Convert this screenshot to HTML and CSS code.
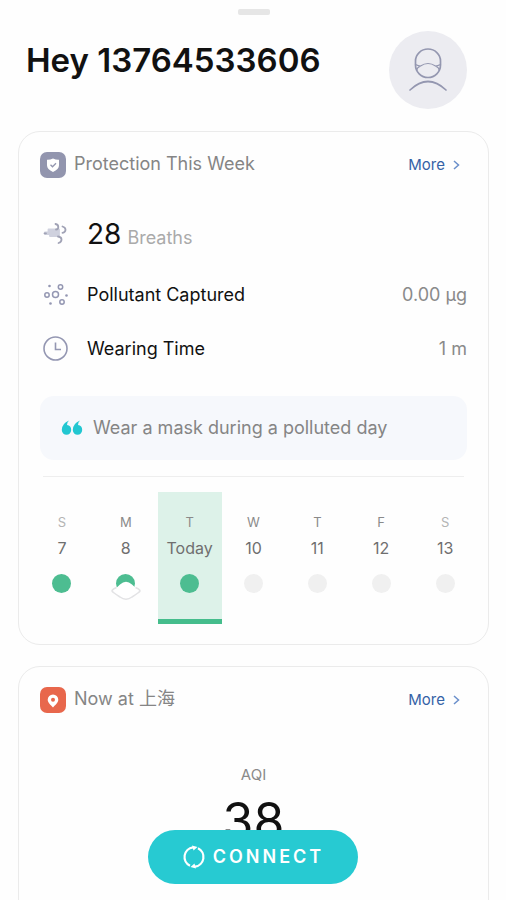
FILE: index.html
```html
<!DOCTYPE html>
<html lang="en">
<head>
<meta charset="utf-8">
<meta name="viewport" content="width=device-width, initial-scale=1">
<title>Protection</title>
<link rel="stylesheet" href="styles.css">
</head>
<body>
<div class="grabber"></div>
<header class="greeting">
  <h1>Hey 13764533606</h1>
  <button class="avatar" type="button" aria-label="Profile">
    <svg width="78" height="78" viewBox="0 0 78 78" fill="none" stroke="#9497b0" stroke-width="1.7" stroke-linecap="round">
      <path d="M26.500 30a12.500 12 0 0 1 25 0v4a12.500 12.500 0 0 1-25 0z"/>
      <path stroke-width="1.200" d="M26.500 33.500q3 1.500 5 1.500q7.500-5 15 0q2 0 5-1.500M31.500 35q-3.500 1.500-4 4.500M46.500 35q3.500 1.500 4 4.500"/>
      <path d="M21 59q18-17 36 0"/>
    </svg>
  </button>
</header>
<main>
  <section class="card">
    <div class="card-head">
      <svg class="badge" width="26" height="26" viewBox="0 0 26 26">
        <rect width="26" height="26" rx="7" fill="#9295ae"/>
        <path d="M13 6.500q3 1.500 6 1.300v5.500q0 4-6 6.700q-6-2.700-6-6.700v-5.500q3 .2 6-1.300z" fill="#fff"/>
        <path d="M10.500 12.800l2 2l3.500-3.500" fill="none" stroke="#9295ae" stroke-width="1.300"/>
      </svg>
      <h2>Protection This Week</h2>
      <a class="more" href="#week">More
        <svg width="7" height="10" viewBox="0 0 7 10" fill="none" stroke="#6a8fcb" stroke-width="1.500"><path d="M1 1l4.500 4L1 9"/></svg>
      </a>
    </div>
    <ul class="stats">
      <li class="breaths">
        <svg width="30" height="30" viewBox="0 0 30 30" fill="none" stroke="#a0a2b5" stroke-width="1.800" stroke-linecap="round">
          <path d="M8.500 10.500H19V17H10V15H5V13.500H8.500z" fill="#cfd1de" stroke="#cfd1de" stroke-linejoin="round"/>
          <path d="M15.500 5q2.800 .5 2.800 3t-2.300 2.500M22.500 7.500q3 .8 3 3.300t-3 3M4.500 14.300h1.500M18 17.500q3.500 .3 3.500 3t-3 3.500"/>
        </svg>
        <p><span class="count">28</span><span class="unit">Breaths</span></p>
      </li>
      <li>
        <svg width="30" height="30" viewBox="0 0 30 30" fill="none" stroke="#9497b2" stroke-width="1.500">
          <circle cx="15.500" cy="14.500" r="3"/><circle cx="7" cy="15" r="2.200"/><circle cx="20.500" cy="7" r="2.200"/><circle cx="22" cy="22" r="2.200"/>
          <g fill="#9497b2" stroke="none"><circle cx="9.500" cy="6" r="1.300"/><circle cx="26.500" cy="15.500" r="1.300"/><circle cx="10.500" cy="23.500" r="1.300"/></g>
        </svg>
        <span class="name">Pollutant Captured</span><span class="value">0.00 µg</span>
      </li>
      <li>
        <svg width="30" height="30" viewBox="0 0 30 30" fill="none" stroke="#9497b2" stroke-width="1.600">
          <circle cx="15.500" cy="14.500" r="11.500"/><path d="M15.500 8.500v7H21"/>
        </svg>
        <span class="name">Wearing Time</span><span class="value">1 m</span>
      </li>
    </ul>
    <p class="tip">
      <svg width="22" height="16" viewBox="0 0 22 16" fill="#22c7d1">
        <path id="q" d="M8 .5Q6 2.200 6 5Q10.200 5.600 10.200 10A4.700 4.800 0 0 1 .8 10Q.8 3.500 8 .5z"/>
        <use href="#q" x="11"/>
      </svg>
      Wear a mask during a polluted day
    </p>
    <ol class="week" id="week">
      <li class="weekend"><span class="day">S</span><span class="date">7</span><i class="dot done"></i></li>
      <li><span class="day">M</span><span class="date">8</span>
        <span class="dot done masked">
          <svg width="32" height="22" viewBox="0 0 32 22"><path d="M2 11.500Q7 9 10 5.500Q16 0 22 5.500Q25 9 30 11.500Q26 15.500 22 18Q16 22.500 10 18Q6 15.500 2 11.500z" fill="#fff"/><path d="M6.500 8.500Q-.5 11.500 3.500 13.500Q6 15.500 10 18Q16 22.500 22 18Q26 15.500 28.500 13.500Q32.500 11.500 25.500 8.500" fill="none" stroke="#e3e3e5" stroke-width="1.500"/></svg>
        </span></li>
      <li class="today"><span class="day">T</span><span class="date">Today</span><i class="dot done"></i></li>
      <li><span class="day">W</span><span class="date">10</span><i class="dot"></i></li>
      <li><span class="day">T</span><span class="date">11</span><i class="dot"></i></li>
      <li><span class="day">F</span><span class="date">12</span><i class="dot"></i></li>
      <li class="weekend"><span class="day">S</span><span class="date">13</span><i class="dot"></i></li>
    </ol>
  </section>
  <section class="card" id="air">
    <div class="card-head">
      <svg class="badge" width="26" height="26" viewBox="0 0 26 26">
        <rect width="26" height="26" rx="7" fill="#e8674c"/>
        <path d="M13 7.500a5.300 5.300 0 0 1 5.300 5.300c0 3-3 5.200-5.300 7.700c-2.300-2.500-5.300-4.700-5.300-7.700A5.300 5.300 0 0 1 13 7.500z" fill="#fff"/>
        <circle cx="13" cy="12.800" r="2" fill="#e8674c"/>
      </svg>
      <h2>Now at 上海</h2>
      <a class="more" href="#air">More
        <svg width="7" height="10" viewBox="0 0 7 10" fill="none" stroke="#6a8fcb" stroke-width="1.500"><path d="M1 1l4.500 4L1 9"/></svg>
      </a>
    </div>
    <div class="aqi"><span class="aqi-label">AQI</span><span class="aqi-value">38</span></div>
  </section>
</main>
<button class="connect" type="button">
  <svg width="24" height="24" viewBox="0 0 24 24" fill="none" stroke="#fff" stroke-width="2.200">
    <path d="M8 20.800A9.800 9.800 0 0 1 11 2.300M16 3.200A9.800 9.800 0 0 1 13 21.700"/>
    <path d="M10 .5L15.500 2L11.500 5.500zM14 23.500L8.500 22L12.500 18.500z" fill="#fff" stroke="none"/>
  </svg>
  CONNECT
</button>
</body>
</html>
```
FILE: styles.css
```css
* { box-sizing: border-box; }

body {
  margin: 0;
  padding: 9px 17px 0 18px;
  background: #fefefe;
  color: #111;
  font-family: Inter, "Noto Sans CJK SC", sans-serif;
  font-size: 18px;
  line-height: 24px;
}

h1, h2, p, ul, ol { margin: 0; padding: 0; }
ul, ol { list-style: none; }
svg { display: block; flex: none; }
button { border: 0; padding: 0; font: inherit; }

.grabber {
  width: 32px;
  height: 6px;
  margin: 0 auto 16px;
  border-radius: 2px;
  background: #e6e6e6;
}

.greeting {
  display: flex;
  justify-content: space-between;
  align-items: flex-start;
  padding: 0 22px 0 8px;
  margin-bottom: 22px;
}

h1 {
  padding-top: 8px;
  font-size: 33px;
  font-weight: 600;
  line-height: 42px;
}

.avatar {
  width: 78px;
  height: 78px;
  border-radius: 50%;
  background: #ececf1;
}

.card {
  padding: 19px 21px 20px;
  margin-bottom: 21px;
  border: 1px solid #ebebeb;
  border-radius: 22px;
}

.card-head {
  display: flex;
  align-items: center;
  gap: 8px;
  height: 28px;
}

h2 {
  flex: 1;
  padding-bottom: 2px;
  color: #858585;
  font-size: 18px;
  font-weight: 400;
}

.more {
  display: flex;
  align-items: center;
  gap: 8px;
  padding-right: 7px;
  color: #3562a6;
  font-size: 15px;
  text-decoration: none;
}

.stats {
  padding-top: 28px;
}

.stats li {
  display: flex;
  align-items: center;
  height: 54px;
}

.stats .breaths {
  margin-bottom: 7px;
}

.stats svg { margin-right: 17px; }

.count {
  margin-right: 6px;
  font-size: 28px;
  line-height: 32px;
}

.unit { color: #aaa; }
.value { margin-left: auto; color: #8a8a8a; }

.tip {
  display: flex;
  align-items: center;
  gap: 10px;
  min-height: 64px;
  margin-top: 20px;
  padding: 0 21px;
  border-radius: 14px;
  background: #f6f8fc;
  color: #858585;
}

.week {
  display: grid;
  grid-template-columns: repeat(7, 1fr);
  margin: 16px -10px 0;
  position: relative;
  padding-top: 16px;
}

.week::before {
  content: "";
  position: absolute;
  inset: 0 13px auto;
  height: 1px;
  background: #eee;
}

.week li {
  display: flex;
  flex-direction: column;
  align-items: center;
  height: 132px;
  padding-top: 20px;
  color: #6f6f6f;
}

.day {
  color: #8a8a8a;
  font-size: 13px;
  line-height: 20px;
}

.weekend .day { color: #b4b4b4; }

.date {
  margin: 4px 0 14px;
  font-size: 16px;
}

.dot {
  width: 19px;
  height: 19px;
  border-radius: 50%;
  background: #f0f0f0;
}

.done { background: #4dbd91; }

.masked { position: relative; }

.masked svg {
  position: absolute;
  top: 5px;
  left: -6px;
}

.week .today {
  border-bottom: 5px solid #45bd8c;
  background: #ddf2e9;
}

.aqi {
  display: flex;
  flex-direction: column;
  align-items: center;
  min-height: 200px;
  padding-top: 49px;
}

.aqi-label {
  color: #8a8a8a;
  font-size: 15px;
}

.aqi-value {
  margin-top: 4px;
  font-size: 50px;
  line-height: 60px;
}

.connect {
  position: fixed;
  bottom: 16px;
  left: 50%;
  transform: translateX(-50%);
  display: flex;
  align-items: center;
  justify-content: center;
  gap: 7px;
  width: 210px;
  height: 54px;
  border-radius: 27px;
  background: #27cad2;
  color: #fff;
  font-size: 18px;
  font-weight: 600;
  letter-spacing: 3px;
}
```
